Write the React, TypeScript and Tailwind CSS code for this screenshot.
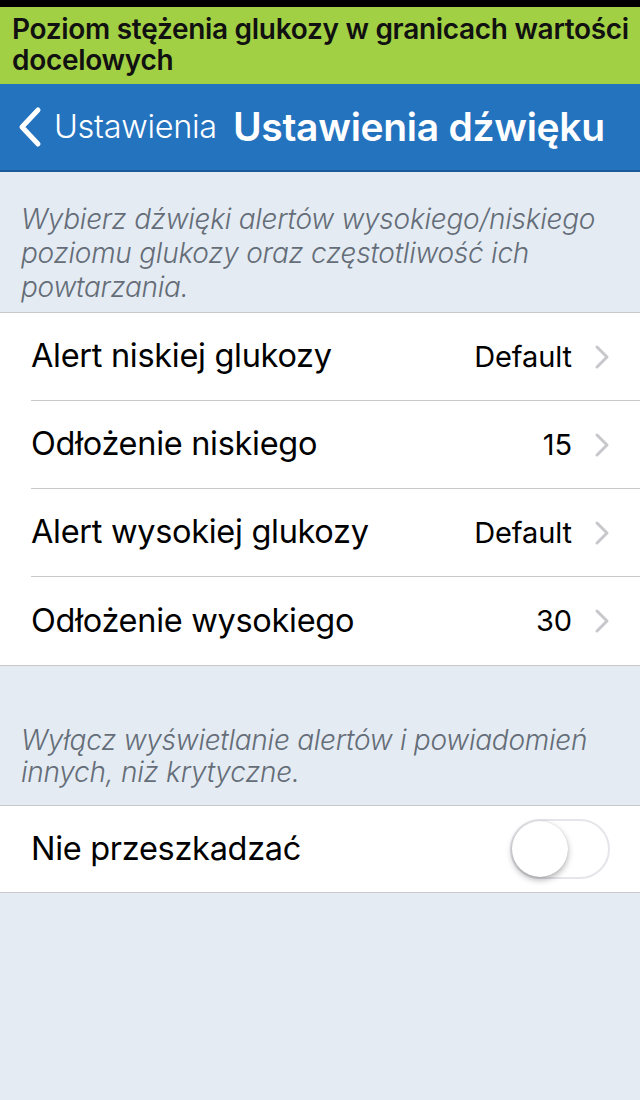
import React from "react";

const font = { fontFamily: "Inter, 'Noto Sans', sans-serif" };

function Chevron() {
  return (
    <svg width="16" height="26" viewBox="0 0 16 26" className="ml-[22px] mr-[30px]">
      <path d="M3 3 L13 13 L3 23" fill="none" stroke="#c7c7cc" strokeWidth="3" strokeLinecap="round" strokeLinejoin="round" />
    </svg>
  );
}

function Row({ label, value, last }: { label: string; value: string; last?: boolean }) {
  return (
    <div className="pl-[31px] bg-white">
      <div className={`h-[88px] flex items-center ${last ? "" : "border-b border-[#c8c7cc]"}`}>
        <span className="flex-1 text-[32.5px] text-black tracking-[-0.3px]">{label}</span>
        <span className="text-[29px] text-black tracking-[-0.1px]">{value}</span>
        <Chevron />
      </div>
    </div>
  );
}

export default function App() {
  return (
    <div className="w-[640px] h-[1100px] bg-[#e4ebf2] flex flex-col overflow-hidden" style={font}>
      <div className="h-[7px] bg-black" />
      <div className="bg-[#a1d045] px-[12px] pt-[7px] h-[77px]">
        <p className="text-[28px] font-semibold leading-[31px] text-[#111] tracking-[-0.3px] whitespace-nowrap">
          Poziom stężenia glukozy w granicach wartości
          <br />
          docelowych
        </p>
      </div>
      <div className="h-[88px] bg-[#2473bf] border-b-2 border-[#1a5a99] flex items-center">
        <svg width="28" height="42" viewBox="0 0 28 42" className="ml-[16px] mr-[10px]">
          <path d="M22 4 L6 21 L22 38" fill="none" stroke="white" strokeWidth="5" strokeLinecap="round" strokeLinejoin="round" />
        </svg>
        <span className="text-[32.5px] text-white font-light tracking-[-0.3px]">Ustawienia</span>
        <span className="ml-[16px] text-[39px] text-white font-semibold tracking-[-0.3px] whitespace-nowrap">Ustawienia dźwięku</span>
      </div>
      <div className="px-[21px] pt-[30px] pb-[8px]">
        <p className="text-[28px] italic font-light leading-[34px] text-[#646d78] tracking-[-0.25px]">
          Wybierz dźwięki alertów wysokiego/niskiego
          <br />
          poziomu glukozy oraz częstotliwość ich
          <br />
          powtarzania.
        </p>
      </div>
      <div className="border-y border-[#c8c7cc]">
        <Row label="Alert niskiej glukozy" value="Default" />
        <Row label="Odłożenie niskiego" value="15" />
        <Row label="Alert wysokiej glukozy" value="Default" />
        <Row label="Odłożenie wysokiego" value="30" last />
      </div>
      <div className="px-[21px] pt-[58px] pb-[17px]">
        <p className="text-[28px] italic font-light leading-[32px] text-[#646d78] tracking-[-0.25px]">
          Wyłącz wyświetlanie alertów i powiadomień
          <br />
          innych, niż krytyczne.
        </p>
      </div>
      <div className="border-y border-[#c8c7cc] bg-white pl-[31px] h-[88px] flex items-center">
        <span className="flex-1 text-[32.5px] text-black tracking-[-0.3px]">Nie przeszkadzać</span>
        <div className="mr-[30px] w-[100px] h-[60px] rounded-full border-2 border-[#e5e5ea] bg-white relative">
          <div className="absolute left-0 top-0 w-[56px] h-[56px] rounded-full bg-white shadow-[0_3px_6px_rgba(0,0,0,0.3),0_0_1px_rgba(0,0,0,0.2)]" />
        </div>
      </div>
    </div>
  );
}
